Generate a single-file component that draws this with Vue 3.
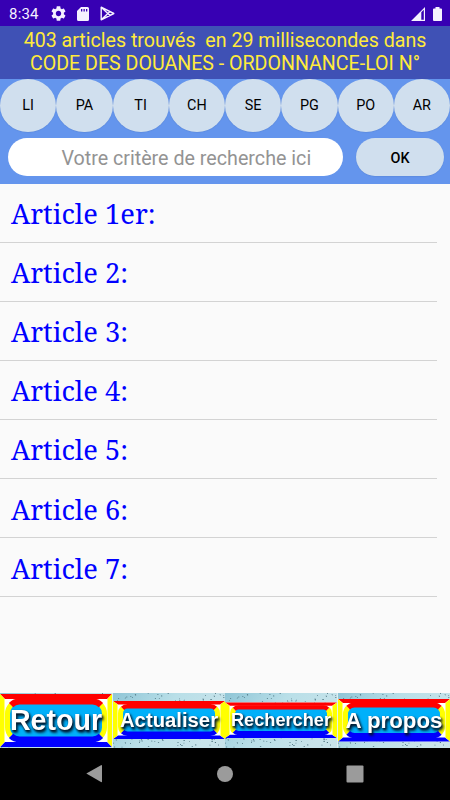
<template>
  <div class="screen">
    <!-- Status bar -->
    <div class="status-bar">
      <span class="clock">8:34</span>
      <svg class="status-icon gear" viewBox="2 2 20 20">
        <path d="M19.14 12.94c.04-.3.06-.61.06-.94 0-.32-.02-.64-.07-.94l2.030-1.580c.18-.14.23-.41.12-.61l-1.920-3.320c-.12-.22-.37-.29-.59-.22l-2.390.96c-.5-.38-1.030-.7-1.620-.94l-.36-2.540c-.04-.24-.24-.41-.48-.41h-3.840c-.24 0-.43.17-.47.41l-.36 2.540c-.59.24-1.130.57-1.620.94l-2.390-.96c-.22-.08-.47 0-.59.22L2.740 8.870c-.12.21-.08.47.12.61l2.030 1.580c-.05.3-.09.63-.09.94s.02.64.07.94l-2.030 1.580c-.18.14-.23.41-.12.61l1.920 3.320c.12.22.37.29.59.22l2.390-.96c.5.38 1.030.7 1.620.94l.36 2.540c.05.24.24.41.48.41h3.840c.24 0 .44-.17.47-.41l.36-2.540c.59-.24 1.130-.56 1.620-.94l2.390.96c.22.08.47 0 .59-.22l1.920-3.320c.12-.22.07-.47-.12-.61l-2.010-1.580zM12 15.600c-1.980 0-3.600-1.620-3.600-3.600s1.620-3.600 3.600-3.600 3.600 1.620 3.600 3.600-1.620 3.600-3.600 3.600z" />
      </svg>
      <svg class="status-icon card" viewBox="0 0 12 14">
        <path fill-rule="evenodd" d="M4 0h6.500Q12 0 12 1.500v11Q12 14 10.500 14h-9Q0 14 0 12.500V4zM4 2v2.500h1.300V2zM6.500 2v2.500h1.300V2zM9 2v2.500h1.300V2z" />
      </svg>
      <svg class="status-icon play" viewBox="0 0 15 15">
        <path d="M1.200 1.200v12.600L13.800 7.500zM1.200 1.200L10 9.400M1.200 13.800L10 5.600" />
      </svg>
      <span class="spacer"></span>
      <svg class="status-icon signal" viewBox="0 0 14 14">
        <path fill-rule="evenodd" d="M14 0v14H0zM10.300 5.200V12.700H12.800V2.800z" />
      </svg>
      <svg class="status-icon battery" viewBox="0 0 9 14">
        <path d="M2.500 1.400V0h4v1.400H8q1 0 1 1V13q0 1-1 1H1q-1 0-1-1V2.400q0-1 1-1z" />
      </svg>
    </div>

    <!-- Result summary -->
    <header class="summary">
      <div>403 articles trouvés&nbsp; en 29 millisecondes dans</div>
      <div>CODE DES DOUANES - ORDONNANCE-LOI N°</div>
    </header>

    <!-- Filters and search -->
    <section class="search-panel">
      <div class="filters">
        <button v-for="filter in filters" :key="filter" class="filter-btn">{{ filter }}</button>
      </div>
      <div class="search-row">
        <input class="search-input" type="text" placeholder="Votre critère de recherche ici" />
        <button class="ok-btn">OK</button>
      </div>
    </section>

    <!-- Articles -->
    <main class="articles">
      <div v-for="article in articles" :key="article" class="article">{{ article }}</div>
    </main>

    <!-- Action buttons -->
    <div class="actions">
      <svg v-for="action in actions" :key="action.label" class="action" viewBox="0 0 112.5 55">
        <defs>
          <linearGradient :id="'sky' + action.id" x1="0" y1="0" x2="1" y2="0.4">
            <stop offset="0" stop-color="#8fc5d6" />
            <stop offset="0.5" stop-color="#b9dfe8" />
            <stop offset="1" stop-color="#c8e3ea" />
          </linearGradient>
        </defs>
        <rect width="112.5" height="55" :fill="`url(#sky${action.id})`" />
        <path :d="speckles" fill="#456b78" />
        <rect x="0" :y="action.top" width="112" :height="action.bottom - action.top" fill="#fff" />
        <path :d="topPath(action)" fill="#f00" />
        <path :d="bottomPath(action)" fill="#00f" />
        <path :d="sidePath(action)" fill="#ff0" />
        <rect x="9" :y="action.top + action.edge - 1" width="94" :height="action.bottom - action.top - action.edge * 2 + 2" :rx="action.radius" fill="#00b0fa" />
        <path :d="ringPath(action, 'side')" class="ring yellow" />
        <path :d="ringPath(action, 'top')" class="ring red" :stroke-width="action.edge / 2 + 1" />
        <path :d="ringPath(action, 'bottom')" class="ring blue" :stroke-width="action.edge / 2 + 1" />
        <text class="caption" x="56" :y="action.baseline" :font-size="action.size">{{ action.label }}</text>
      </svg>
    </div>

    <!-- System navigation -->
    <nav class="nav-bar">
      <svg viewBox="0 0 18 20"><path d="M.3 9.500L15 1.200Q16 .8 16 2v15.500q0 1-1 .5z" /></svg>
      <svg viewBox="0 0 18 20"><circle cx="9" cy="10" r="8" /></svg>
      <svg viewBox="0 0 18 20"><rect x="0.500" y="1.500" width="17" height="17" rx="1" /></svg>
    </nav>
  </div>
</template>

<script setup>
const filters = ['LI', 'PA', 'TI', 'CH', 'SE', 'PG', 'PO', 'AR']

const articles = [
  'Article 1er:',
  'Article 2:',
  'Article 3:',
  'Article 4:',
  'Article 5:',
  'Article 6:',
  'Article 7:'
]

const actions = [
  { id: 1, label: 'Retour', top: 1, bottom: 54, edge: 10, radius: 12, size: 28.6, baseline: 36.8 },
  { id: 2, label: 'Actualiser', top: 8, bottom: 46, edge: 7, radius: 7, size: 20.3, baseline: 34 },
  { id: 3, label: 'Rechercher', top: 9.5, bottom: 45, edge: 6.5, radius: 6, size: 18.2, baseline: 33.3 },
  { id: 4, label: 'A propos', top: 6, bottom: 48.5, edge: 8, radius: 9, size: 22.3, baseline: 35 }
]

const sidePath = ({ top, bottom, edge }) => {
  const inner = edge / 2
  return `M0 ${top}L4.5 ${top + inner}V${bottom - inner}L0 ${bottom}z M112 ${top}L107.5 ${top + inner}V${bottom - inner}L112 ${bottom}z`
}

const topPath = ({ top, edge }) => `M0 ${top}H112L107 ${top + edge / 2}H5z`

const bottomPath = ({ bottom, edge }) => `M0 ${bottom}H112L107 ${bottom - edge / 2}H5z`

// rounded ring between the frame and the plate, split in the middle of each corner
const ringPath = ({ top, bottom, edge, radius: r }, part) => {
  const l = 7.5
  const x = 104.5
  const t = top + edge * 0.75
  const b = bottom - edge * 0.75
  const k = r * 0.293
  const arc = `A${r} ${r} 0 0 1`
  if (part === 'top') return `M${l + k} ${t + k}${arc} ${l + r} ${t}H${x - r}${arc} ${x - k} ${t + k}`
  if (part === 'bottom') return `M${x - k} ${b - k}${arc} ${x - r} ${b}H${l + r}${arc} ${l + k} ${b - k}`
  return `M${l + k} ${b - k}${arc} ${l} ${b - r}V${t + r}${arc} ${l + k} ${t + k} M${x - k} ${t + k}${arc} ${x} ${t + r}V${b - r}${arc} ${x - k} ${b - k}`
}

// small dark drops on the background
let seed = 7
const random = () => {
  seed = (seed * 16807) % 2147483647
  return seed / 2147483647
}

const speckles = Array.from({ length: 200 }, () => {
  const x = random() * 111
  const y = random() * 54
  return `M${x.toFixed(1)} ${y.toFixed(1)}h${(0.6 + random()).toFixed(1)}v.8h-.8z`
}).join('')
</script>

<style>
body {
  background: #fafafa;
}
</style>

<style scoped>
.screen {
  width: 450px;
  height: 800px;
  display: flex;
  flex-direction: column;
  overflow: hidden;
  background: #fafafa;
  font-family: Roboto, sans-serif;
}

.status-bar {
  height: 26px;
  flex-shrink: 0;
  box-sizing: border-box;
  display: flex;
  align-items: center;
  padding: 1px 8px 0 9px;
  background: #3700b3;
  color: #f5f1ff;
}

.clock {
  width: 42px;
  font-size: 15px;
  letter-spacing: 0.2px;
}

.status-icon {
  fill: #f5f1ff;
}

.gear {
  width: 15px;
  height: 15px;
}

.card {
  width: 12px;
  height: 14px;
  margin-left: 11px;
}

.play {
  width: 15px;
  height: 15px;
  margin-left: 11px;
  fill: none;
  stroke: #f5f1ff;
  stroke-width: 1.4;
  stroke-linejoin: round;
}

.spacer {
  flex: 1;
}

.signal {
  width: 14px;
  height: 14px;
  margin-right: 8px;
}

.battery {
  width: 9px;
  height: 14px;
}

.summary {
  height: 53px;
  flex-shrink: 0;
  box-sizing: border-box;
  padding-top: 4px;
  background: #3f51b5;
  color: #ffeb3b;
  font-size: 19.6px;
  line-height: 22.5px;
  text-align: center;
  white-space: nowrap;
}

.search-panel {
  height: 104.5px;
  flex-shrink: 0;
  background: #6495ed;
}

.filters {
  display: flex;
  height: 52.5px;
}

.filter-btn,
.ok-btn {
  border: none;
  padding: 0;
  background: #d0dfee;
  color: #000;
  font-family: Roboto, sans-serif;
  font-size: 14.4px;
  font-weight: 500;
  box-shadow: 0 0.5px 1px rgba(40, 70, 130, 0.2);
}

.filter-btn {
  flex: 1;
  border-radius: 28px / 26.5px;
  padding-top: 1px;
  font-weight: 450;
}

.ok-btn {
  width: 88px;
  height: 38px;
  border-radius: 19px;
  padding-top: 2px;
}

.search-row {
  display: flex;
  gap: 13px;
  padding: 6.5px 6px 0 7.500px;
}

.search-input {
  width: 336px;
  height: 38px;
  box-sizing: border-box;
  border: none;
  border-radius: 19px;
  padding: 3px 0 0 22px;
  background: #fff;
  font-family: Roboto, sans-serif;
  font-size: 19.7px;
  text-align: center;
}

.search-input::placeholder {
  color: #939393;
  opacity: 1;
}

.articles {
  flex: 1;
}

.article {
  width: 437px;
  height: 59.15px;
  box-sizing: border-box;
  padding: 1.3px 0 0 11px;
  border-bottom: 1px solid #d3d3d3;
  color: #00f;
  font-family: "Noto Serif", "Liberation Serif", serif;
  font-size: 27.3px;
  line-height: 58px;
}

.actions {
  display: flex;
  height: 55px;
  flex-shrink: 0;
}

.action {
  width: 112.5px;
  height: 55px;
}

.ring {
  fill: none;
}

.yellow {
  stroke: #ff0;
  stroke-width: 5;
}

.red {
  stroke: #f00;
}

.blue {
  stroke: #00f;
}

.caption {
  fill: #fff;
  font-family: "Liberation Sans", sans-serif;
  font-weight: 700;
  text-anchor: middle;
  filter: drop-shadow(1.5px 2px 1px #001428) drop-shadow(1px 1px 1px rgba(0, 20, 40, 0.6));
}

.nav-bar {
  height: 52px;
  flex-shrink: 0;
  box-sizing: border-box;
  display: flex;
  justify-content: space-between;
  align-items: center;
  padding: 0 86.500px 0 85.500px;
  background: #000;
}

.nav-bar svg {
  width: 18px;
  height: 20px;
  fill: #9b9b9b;
}
</style>
